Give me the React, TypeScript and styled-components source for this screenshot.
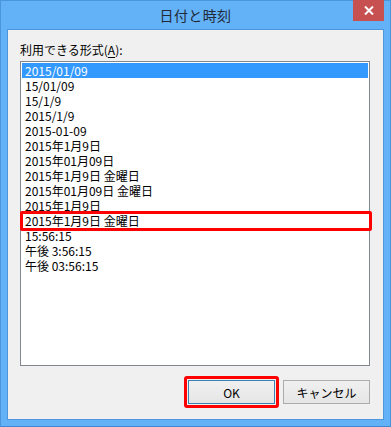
import styled, { createGlobalStyle } from "styled-components";

const formats = [
  "2015/01/09",
  "15/01/09",
  "15/1/9",
  "2015/1/9",
  "2015-01-09",
  "2015年1月9日",
  "2015年01月09日",
  "2015年1月9日 金曜日",
  "2015年01月09日 金曜日",
  "2015年1月9日",
  "2015年1月9日 金曜日",
  "15:56:15",
  "午後 3:56:15",
  "午後 03:56:15",
];

const GlobalStyle = createGlobalStyle`
  html, body {
    margin: 0;
    padding: 0;
    background: #ffffff;
  }
  body {
    font-family: "Noto Sans CJK JP", "Noto Sans", sans-serif;
  }
`;

const Window = styled.div`
  width: 391px;
  height: 427px;
  box-sizing: border-box;
  border: 1px solid #4a95de;
  border-bottom-color: #3f86cc;
  background: #63b1f7;
  display: flex;
  flex-direction: column;
`;

const TitleBar = styled.div`
  height: 29px;
  display: grid;
  grid-template-columns: 1fr auto 1fr;
  align-items: start;
`;

const Title = styled.div`
  grid-column: 2;
  padding-top: 5px;
  font-size: 14px;
  line-height: 19px;
  color: #1f2a36;
  letter-spacing: 0.4px;
`;

const CloseButton = styled.div`
  grid-column: 3;
  justify-self: end;
  margin-top: -1px;
  margin-right: 6px;
  width: 31px;
  height: 21px;
  background: #c75050;
  display: flex;
  align-items: center;
  justify-content: center;
`;

const Panel = styled.div`
  flex: 1;
  margin: 0 6px 6px 6px;
  border: 1px solid #4d96dd;
  background: #f0f0f0;
  display: flex;
  flex-direction: column;
  padding: 12px 13px 15px 12px;
`;

const Label = styled.div`
  font-size: 12px;
  line-height: 16px;
  color: #000;
  margin-bottom: 3px;
  u {
    text-underline-offset: 2px;
  }
`;

const ListBox = styled.div`
  height: 305px;
  box-sizing: border-box;
  border: 1px solid #828790;
  background: #ffffff;
  padding: 1px 1px;
  display: flex;
  flex-direction: column;
`;

const Row = styled.div<{ $selected?: boolean; $marked?: boolean }>`
  position: relative;
  height: 15px;
  line-height: 15px;
  padding-left: 3px;
  font-size: 12px;
  white-space: nowrap;
  color: ${(p) => (p.$selected ? "#ffffff" : "#000000")};
  background: ${(p) => (p.$selected ? "#3399ff" : "transparent")};
  &::after {
    content: "";
    display: ${(p) => (p.$marked ? "block" : "none")};
    position: absolute;
    left: -2px;
    right: -4px;
    top: -2px;
    bottom: -3px;
    border: 3px solid #ff0000;
    border-radius: 2px;
  }
`;

const Buttons = styled.div`
  margin-top: 14px;
  display: flex;
  justify-content: flex-end;
  gap: 8px;
`;

const Button = styled.div<{ $default?: boolean; $marked?: boolean }>`
  position: relative;
  width: 87px;
  height: 24px;
  box-sizing: border-box;
  border: 1px solid ${(p) => (p.$default ? "#3c7fb1" : "#acacac")};
  background: linear-gradient(#f0f0f0, #e5e5e5);
  display: flex;
  align-items: center;
  justify-content: center;
  font-size: 12px;
  color: #000;
  &::after {
    content: "";
    display: ${(p) => (p.$marked ? "block" : "none")};
    position: absolute;
    inset: -5px;
    border: 3px solid #ff0000;
    border-radius: 3px;
  }
`;

export default function App() {
  return (
    <>
      <GlobalStyle />
      <Window>
        <TitleBar>
          <Title>日付と時刻</Title>
          <CloseButton>
            <svg width="10" height="9" viewBox="0 0 10 9">
              <path d="M1 0.5 L9 8.5 M9 0.5 L1 8.5" stroke="#ffffff" strokeWidth="2" />
            </svg>
          </CloseButton>
        </TitleBar>
        <Panel>
          <Label>
            利用できる形式(<u>A</u>):
          </Label>
          <ListBox>
            {formats.map((f, i) => (
              <Row key={i} $selected={i === 0} $marked={i === 10}>
                {f}
              </Row>
            ))}
          </ListBox>
          <Buttons>
            <Button $default $marked>
              OK
            </Button>
            <Button>キャンセル</Button>
          </Buttons>
        </Panel>
      </Window>
    </>
  );
}
